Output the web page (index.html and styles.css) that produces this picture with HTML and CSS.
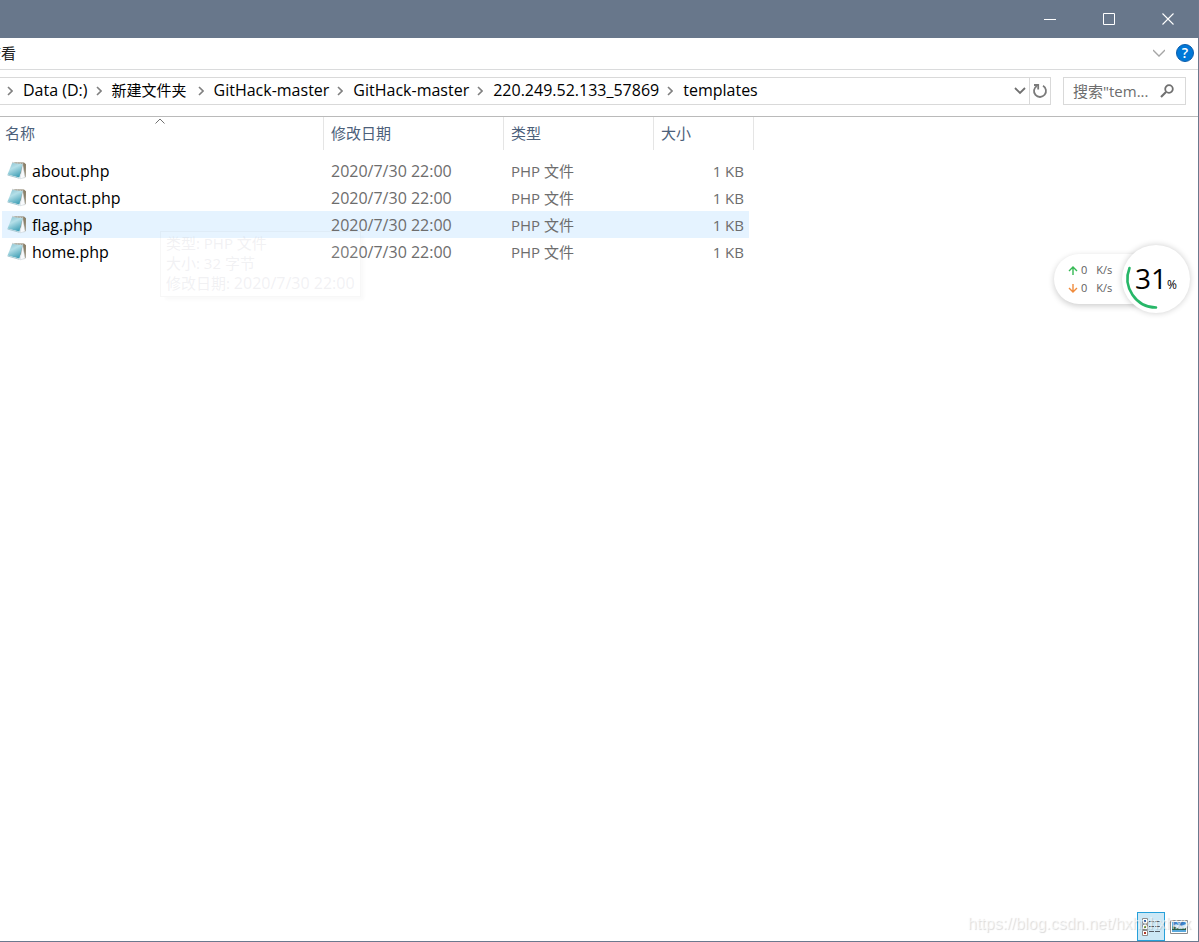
FILE: index.html
```html
<!DOCTYPE html>
<html lang="zh-CN">
<head>
<meta charset="utf-8">
<title>templates</title>
<link rel="stylesheet" href="styles.css">
</head>
<body>
<svg class="sprite" aria-hidden="true">
  <defs>
    <linearGradient id="cover" x1="0.2" y1="0" x2="0.7" y2="1">
      <stop offset="0" stop-color="#8ec6d4"/>
      <stop offset="0.35" stop-color="#b4dfe8"/>
      <stop offset="1" stop-color="#3a9cb3"/>
    </linearGradient>
    <symbol id="notepad" viewBox="0 0 20 20">
      <path d="M6.500 1.300 17 1.600 19 3.200 18.700 16 16 17z" fill="#8b8069"/>
      <path d="M15.600 3 18.200 16.600 13 17.800z" fill="#f8fafc" stroke="#c3ccd2" stroke-width=".5"/>
      <path d="M5.200 1.800 15.600 3 12.400 16.600.5 13.400z" fill="url(#cover)"/>
      <path d="M5.200 1.500 16.500 2.700" stroke="#c9cdcb" stroke-width="1.400" stroke-dasharray="1 .6"/>
      <path d="M.5 14 12.400 17.300" stroke="#a9c9d2" stroke-width="1"/>
    </symbol>
    <symbol id="crumb" viewBox="0 0 6 10"><path d="M1 1 5 5 1 9" fill="none" stroke="#808080" stroke-width="1.6"/></symbol>
  </defs>
</svg>
<div class="window">
  <header class="titlebar">
    <button class="caption" aria-label="最小化"><svg width="12" height="12"><path d="M0 6.5H12" stroke="#fff"/></svg></button>
    <button class="caption" aria-label="最大化"><svg width="12" height="12"><path d="M.5.5h11v11H.5z" fill="none" stroke="#fff"/></svg></button>
    <button class="caption" aria-label="关闭"><svg width="12" height="12"><path d="M.5.5l11 11M11.5.5l-11 11" stroke="#fff" stroke-width="1.1"/></svg></button>
  </header>
  <div class="ribbon">
    <button class="tab"><span>查看</span></button>
    <div class="ribbon-tools">
      <button class="plain" aria-label="展开功能区"><svg width="12" height="8"><path d="M0 1 6 7 12 1" fill="none" stroke="#a6a6a6" stroke-width="1.3"/></svg></button>
      <button class="help" aria-label="帮助">?</button>
    </div>
  </div>
  <div class="navrow">
    <nav class="address">
      <svg class="sep"><use href="#crumb"/></svg><a href="#">Data (D:)</a>
      <svg class="sep"><use href="#crumb"/></svg><a class="han" href="#">新建文件夹</a>
      <svg class="sep"><use href="#crumb"/></svg><a href="#">GitHack-master</a>
      <svg class="sep"><use href="#crumb"/></svg><a href="#">GitHack-master</a>
      <svg class="sep"><use href="#crumb"/></svg><a href="#">220.249.52.133_57869</a>
      <svg class="sep"><use href="#crumb"/></svg><a href="#">templates</a>
      <button class="plain drop" aria-label="以前的位置"><svg width="12" height="8"><path d="M1 1 6 6 11 1" fill="none" stroke="#707070" stroke-width="1.8"/></svg></button>
      <button class="plain refresh" aria-label="刷新"><svg width="16" height="16" fill="none" stroke="#7a7a7a" stroke-width="1.8"><path d="M11 2.800a6 6 0 1 1-6.200.1"/><path d="M2 2H6.200V6.500"/></svg></button>
    </nav>
    <div class="search">
      <input type="text" aria-label="搜索" placeholder='搜索"tem...'>
      <button class="plain" aria-label="开始搜索"><svg width="14" height="14" fill="none" stroke="#707070"><circle cx="9" cy="5" r="3.8" stroke-width="1.8"/><path d="M6 8 1 13" stroke-width="2.2"/></svg></button>
    </div>
  </div>
  <main class="content">
    <table class="files">
      <colgroup><col class="c-name"><col class="c-date"><col class="c-type"><col class="c-size"><col class="c-edge"></colgroup>
      <thead>
        <tr><th class="sorted">名称<svg class="sort" width="10" height="6"><path d="M.5 5.5 5 1 9.500 5.500" fill="none" stroke="#707070"/></svg></th><th>修改日期</th><th>类型</th><th colspan="2">大小</th></tr>
      </thead>
      <tbody>
        <tr><td><div class="file"><svg class="icon"><use href="#notepad"/></svg>about.php</div></td><td class="date">2020/7/30 22:00</td><td>PHP 文件</td><td>1 KB</td></tr>
        <tr><td><div class="file"><svg class="icon"><use href="#notepad"/></svg>contact.php</div></td><td class="date">2020/7/30 22:00</td><td>PHP 文件</td><td>1 KB</td></tr>
        <tr class="hover"><td><div class="file"><svg class="icon"><use href="#notepad"/></svg>flag.php</div></td><td class="date">2020/7/30 22:00</td><td>PHP 文件</td><td>1 KB</td></tr>
        <tr><td><div class="file"><svg class="icon"><use href="#notepad"/></svg>home.php</div></td><td class="date">2020/7/30 22:00</td><td>PHP 文件</td><td>1 KB</td></tr>
      </tbody>
    </table>
    <div class="tooltip" role="tooltip">类型: PHP 文件<br>大小: 32 字节<br>修改日期: <span class="date">2020/7/30 22:00</span></div>
  </main>
  <footer class="status">
    <button class="view active" aria-label="详细信息"><svg width="20" height="18"><g fill="#fff" stroke="#8c8c8c"><path d="M1.500.5h5v5h-5zM1.500 6.500h5v5h-5zM1.500 12.500h5v5h-5z"/></g><path d="M3 2h2v2H3z" fill="#3568a8"/><path d="M3 8h2v2H3z" fill="#6a9a3c"/><path d="M3 14h2v2H3z" fill="#b03a2a"/><path d="M8 3.500h5M14 3.500h5M8 8.500h5M14 8.500h5M8 13.500h5M14 13.500h5" stroke="#555d66"/></svg></button>
    <button class="view" aria-label="大图标"><svg width="18" height="14"><path d="M.5.5h17v13H.5z" fill="#fff" stroke="#8c8c8c"/><path d="M2 2h14v10H2z" fill="#3f86cf"/><path d="M2 7Q5 3 8 5T16 4V9H2z" fill="#d5e8f7"/><path d="M2 6l3 1 4 2 7-1v2H2z" fill="#2d6550"/><path d="M2 10h14v2H2z" fill="#5aa9dc"/></svg></button>
  </footer>
</div>
<div class="monitor">
  <div class="speeds">
    <div class="speed"><svg width="10" height="9" fill="none" stroke="#35b954" stroke-width="1.4"><path d="M5 9V1M1 5l4-4 4 4"/></svg><span>0</span><span class="unit">K/s</span></div>
    <div class="speed"><svg width="10" height="9" fill="none" stroke="#f08b3c" stroke-width="1.4"><path d="M5 0V8M1 4l4 4 4-4"/></svg><span>0</span><span class="unit">K/s</span></div>
  </div>
  <div class="gauge"><svg class="arc" viewBox="0 0 68 68"><path d="M7.500 23A29 29 0 0 0 34 62.500" fill="none" stroke="#27b768" stroke-width="2.600" stroke-linecap="round"/></svg><span class="percent">31</span><span class="sign">%</span></div>
</div>
<div class="watermark">https://blog.csdn.net/hxhxhxhxx</div>
</body>
</html>
```

FILE: styles.css
```css
* { box-sizing: border-box; }
body {
  margin: 0;
  background: #fff;
  color: #000;
  font: 15px/20px "Open Sans", "Noto Sans CJK SC", sans-serif;
}
button, input { font: inherit; color: inherit; margin: 0; padding: 0; border: 0; background: none; }
svg { display: block; flex: none; }
.sprite { position: absolute; width: 0; height: 0; }
.window {
  position: relative;
  display: flex;
  flex-direction: column;
  min-height: 100vh;
  border: solid #6b798e;
  border-width: 0 1px 1px 0;
}
.titlebar { display: flex; justify-content: flex-end; height: 38px; padding-right: 1px; background: #68778b; }
.caption { width: 59px; display: grid; place-items: center; }
.ribbon {
  display: flex;
  justify-content: space-between;
  align-items: center;
  height: 32px;
  padding: 0 4px 2px 0;
  border-bottom: 1px solid #dadbdc;
}
.tab { width: 16px; display: flex; justify-content: flex-end; overflow: hidden; white-space: nowrap; color: #222; }
.ribbon-tools { display: flex; align-items: center; gap: 11px; }
.plain { display: grid; place-items: center; }
.help {
  width: 18px;
  height: 18px;
  border: 1px solid #0b5cab;
  border-radius: 50%;
  background: #0078d7;
  color: #fff;
  font-size: 14px;
  font-weight: 600;
  line-height: 16px;
}
.navrow { display: flex; gap: 12px; padding: 7px 12px 11px 0; border-bottom: 1px solid #bababa; }
.address {
  flex: 1;
  display: flex;
  align-items: center;
  height: 28px;
  padding-left: 7px;
  border: 1px solid #d9d9d9;
  border-left: 0;
}
.address a { color: #000; text-decoration: none; margin: 0 8px 0 10px; padding-bottom: 2px; font-size: 16px; white-space: nowrap; }
.address .han { margin-right: 11px; font-size: 15px; }
.sep { width: 6px; height: 10px; }
.drop { margin-left: auto; width: 19px; height: 26px; }
.refresh { width: 21px; height: 26px; border-left: 1px solid #d9d9d9; }
.search {
  display: flex;
  align-items: center;
  width: 123px;
  height: 28px;
  padding: 0 11px 0 9px;
  border: 1px solid #d9d9d9;
}
.search input { flex: 1; min-width: 0; }
.search input::placeholder { color: #6d6d6d; opacity: 1; }
.content { position: relative; flex: 1; padding-left: 2px; }
.files { width: 752px; table-layout: fixed; border-collapse: separate; border-spacing: 0; }
.c-name { width: 322px; }
.c-date { width: 180px; }
.c-type { width: 150px; }
.c-size { width: 95px; }
.c-edge { width: 5px; }
th {
  height: 33px;
  padding: 0 7px 2px;
  border-right: 1px solid #e5e5e5;
  color: #4c607a;
  font-weight: 400;
  text-align: left;
}
th.sorted { position: relative; padding-left: 3px; }
.sort { position: absolute; top: 1px; left: 153px; }
tbody::before { content: ""; display: block; height: 7px; }
td { height: 27px; padding: 0 7px; color: #6d6d6d; white-space: nowrap; }
td:first-child { padding-left: 5px; color: #000; font-size: 16px; }
td:nth-child(4) { padding-right: 5px; text-align: right; }
.date { font-size: 16px; }
.hover td { background: #e5f3ff; }
.file { display: flex; align-items: center; gap: 5px; }
.icon { width: 20px; height: 20px; }
.tooltip {
  position: absolute;
  top: 114px;
  left: 160px;
  padding: 1px 5px 3px;
  border: 1px solid rgba(0, 0, 0, .03);
  background: rgba(255, 255, 255, .08);
  box-shadow: 4px 4px 3px -1px rgba(0, 0, 0, .025);
  color: rgba(200, 200, 210, .25);
  white-space: nowrap;
}
.status { display: flex; justify-content: flex-end; padding-right: 5px; }
.view { width: 28px; height: 29px; display: grid; place-items: center; }
.view.active { border: 1px solid #26a0da; background: #cce8f6; }
.monitor { position: absolute; top: 245px; right: 9px; display: flex; align-items: center; }
.speeds {
  width: 102px;
  height: 50px;
  margin-right: -34px;
  padding: 7px 0 7px 14px;
  border-radius: 25px;
  background: #fff;
  box-shadow: 0 2px 6px rgba(0, 0, 0, .2);
}
.speed { display: flex; align-items: center; gap: 3px; height: 18px; color: #606060; font-size: 11px; }
.unit { margin-left: 6px; }
.gauge {
  position: relative;
  display: flex;
  align-items: baseline;
  justify-content: center;
  width: 68px;
  height: 68px;
  padding-top: 13px;
  border-radius: 50%;
  background: #fff;
  box-shadow: 0 0 6px rgba(0, 0, 0, .2);
}
.arc { position: absolute; inset: 0; }
.percent { font-size: 28px; line-height: 40px; }
.sign { font-size: 12px; }
.watermark {
  position: absolute;
  right: 8px;
  bottom: 8px;
  color: rgba(255, 255, 255, .6);
  font: 16px/20px "Liberation Sans", sans-serif;
  text-shadow: 1px 1px 1px rgba(0, 0, 0, .15);
  pointer-events: none;
}
```
